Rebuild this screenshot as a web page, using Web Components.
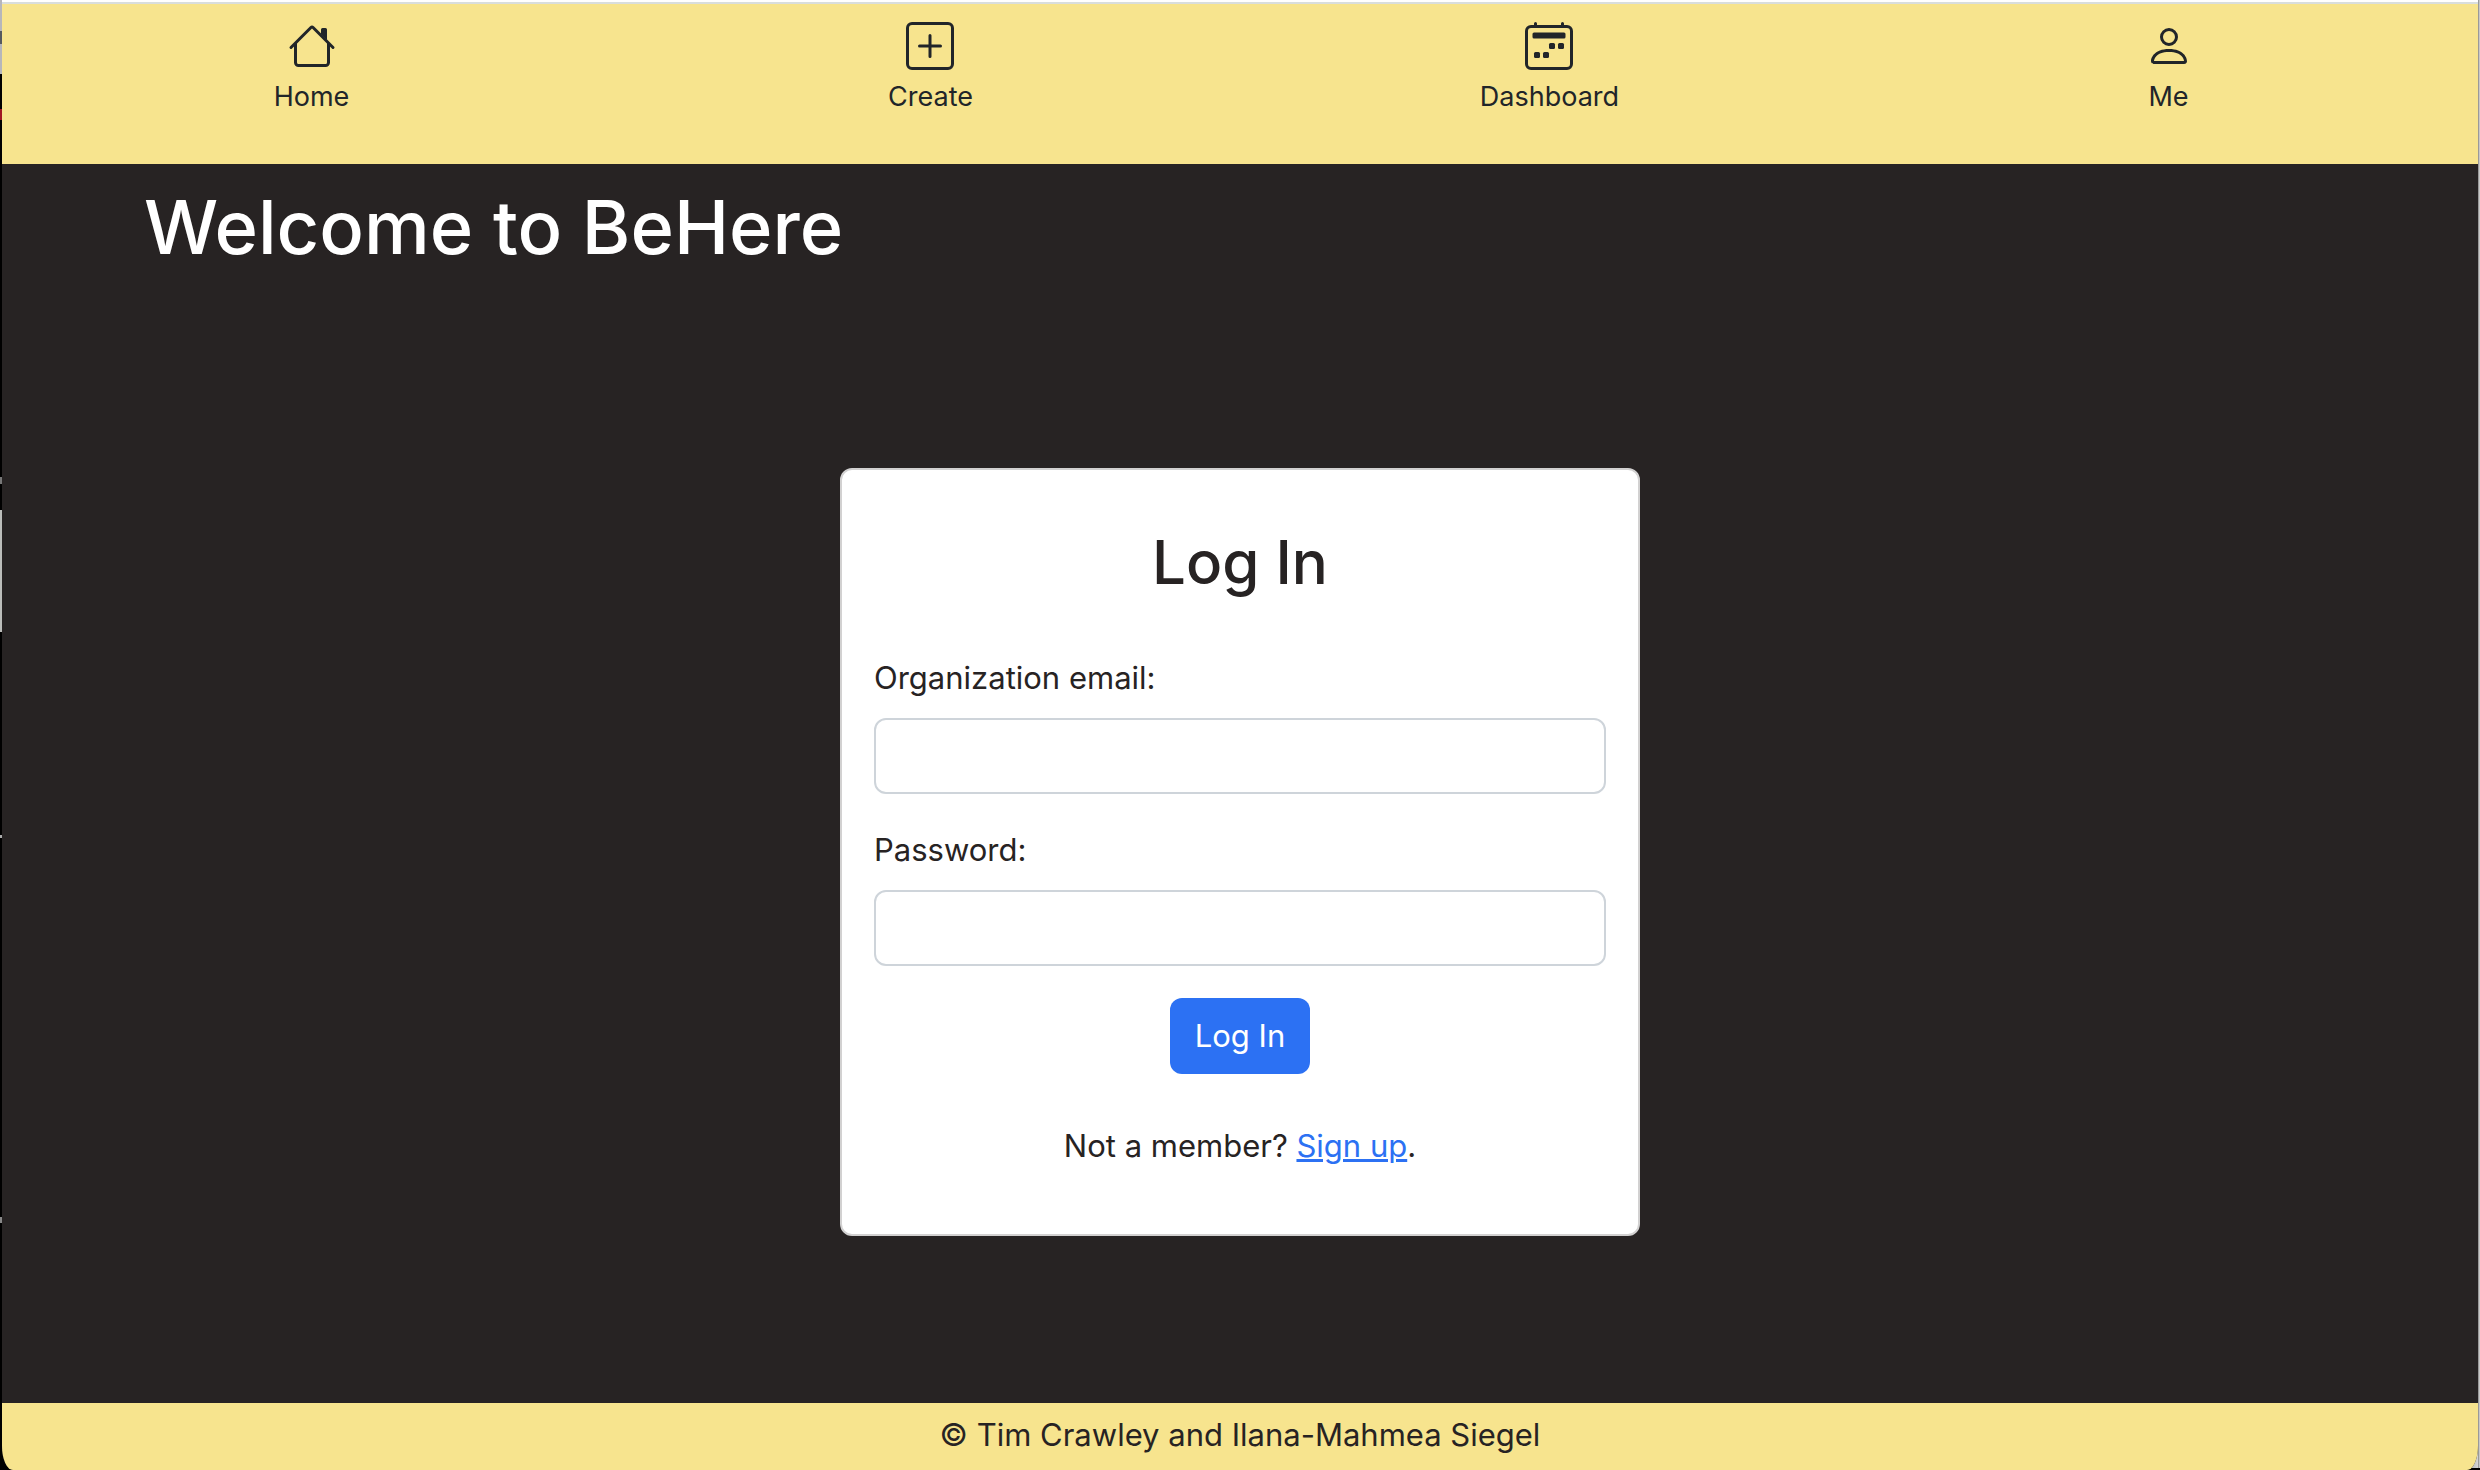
<!DOCTYPE html>
<html lang="en">
<head>
<meta charset="utf-8">
<meta name="viewport" content="width=device-width, initial-scale=1">
<title>BeHere</title>
<style>
  :root { --sand: #f7e48e; --ink: #272323; --blue: #2c71f3; --line: #ced4da; }
  body { margin: 0; font: 400 31px/48px Inter, "Liberation Sans", sans-serif; color: var(--ink); }
</style>
</head>
<body>
<be-app>
  <be-nav slot="nav">
    <be-nav-item icon="house" href="#home">Home</be-nav-item>
    <be-nav-item icon="plus" href="#create">Create</be-nav-item>
    <be-nav-item icon="calendar" href="#dashboard">Dashboard</be-nav-item>
    <be-nav-item icon="person" href="#me">Me</be-nav-item>
  </be-nav>
  <be-welcome>Welcome to BeHere</be-welcome>
  <be-login></be-login>
  <be-footer slot="footer">© Tim Crawley and Ilana-Mahmea Siegel</be-footer>
</be-app>
<script>
const define = (name, html, setup) => customElements.define(name, class extends HTMLElement {
  constructor() {
    super();
    const template = document.createElement('template');
    template.innerHTML = '<style>*{box-sizing:border-box}</style>' + html;
    this.attachShadow({ mode: 'open' }).append(template.content.cloneNode(true));
  }
  connectedCallback() { if (setup) setup(this, this.shadowRoot); }
});

// Window frame: desktop shows through the narrow margins at both sides.
define('be-app', `
<style>
  :host {
    display: flex; min-height: 100vh; padding: 0 2px; box-sizing: border-box;
    background:
      linear-gradient(90deg, #999 1px, #c8c8c8 1px) right top / 2px calc(100% - 2px) no-repeat,
      linear-gradient(90deg, #999, #ddd) right bottom 2px / 16px 24px no-repeat,
      linear-gradient(#b6b6bb 31px, #56595f 31px 44px, #b6b6bb 44px 74px, #000 74px 109px,
        #a01822 109px 120px, #000 120px 477px, #777 477px 484px, #000 484px 510px, #bbbdba 510px 632px,
        #000 632px 835px, #aaa 835px 838px, #000 838px 1217px, #888 1217px 1223px, #000 1223px) left top / 2px 100% no-repeat,
      #000;
  }
  .window {
    flex: 1; display: flex; flex-direction: column; overflow: hidden;
    border-top: 2px solid #fff; border-radius: 0 0 11px 11px / 0 0 24px 24px; background: var(--ink);
  }
  main { flex: 1; display: flex; flex-direction: column; padding-top: 15px; }
</style>
<div class="window"><slot name="nav"></slot><main><slot></slot></main><slot name="footer"></slot></div>`);

define('be-nav', `
<style>
  :host { display: block; background: var(--sand); border-top: 2px solid #d9dedd; }
  nav { display: flex; padding: 18px 0 44px; }
</style>
<nav><slot></slot></nav>`);

const icons = {
  house: '<path fill-rule="evenodd" d="M2 13.5V7h1v6.5a.5.5 0 0 0 .5.5h9a.5.5 0 0 0 .5-.5V7h1v6.5a1.5 1.5 0 0 1-1.5 1.5h-9A1.5 1.5 0 0 1 2 13.5zm11-11V6l-2-2V2.5a.5.5 0 0 1 .5-.5h1a.5.5 0 0 1 .5.5z"/><path fill-rule="evenodd" d="M7.293 1.5a1 1 0 0 1 1.414 0l6.647 6.646a.5.5 0 0 1-.708.708L8 2.207 1.354 8.854a.5.5 0 1 1-.708-.708L7.293 1.5z"/>',
  plus: '<path d="M14 1a1 1 0 0 1 1 1v12a1 1 0 0 1-1 1H2a1 1 0 0 1-1-1V2a1 1 0 0 1 1-1h12zM2 0a2 2 0 0 0-2 2v12a2 2 0 0 0 2 2h12a2 2 0 0 0 2-2V2a2 2 0 0 0-2-2H2z"/><path d="M8 4a.5.5 0 0 1 .5.5v3h3a.5.5 0 0 1 0 1h-3v3a.5.5 0 0 1-1 0v-3h-3a.5.5 0 0 1 0-1h3v-3A.5.5 0 0 1 8 4z"/>',
  calendar: '<path d="M3.5 0a.5.5 0 0 1 .5.5V1h8V.5a.5.5 0 0 1 1 0V1h1a2 2 0 0 1 2 2v11a2 2 0 0 1-2 2H2a2 2 0 0 1-2-2V3a2 2 0 0 1 2-2h1V.5a.5.5 0 0 1 .5-.5zM2 2a1 1 0 0 0-1 1v11a1 1 0 0 0 1 1h12a1 1 0 0 0 1-1V3a1 1 0 0 0-1-1H2z"/><rect x="2.5" y="3.5" width="11" height="2" rx=".5"/><rect x="11" y="7" width="2" height="2" rx=".5"/><rect x="8" y="7" width="2" height="2" rx=".5"/><rect x="3" y="10" width="2" height="2" rx=".5"/><rect x="6" y="10" width="2" height="2" rx=".5"/>',
  person: '<path d="M8 8a3 3 0 1 0 0-6 3 3 0 0 0 0 6zm2-3a2 2 0 1 1-4 0 2 2 0 0 1 4 0zm4 8c0 1-1 1-1 1H3s-1 0-1-1 1-4 6-4 6 3 6 4zm-1-.004c-.001-.246-.154-.986-.832-1.664C11.516 10.68 10.289 10 8 10c-2.29 0-3.516.68-4.168 1.332-.678.678-.83 1.418-.832 1.664h10z"/>'
};

define('be-nav-item', `
<style>
  :host { flex: 1; display: flex; justify-content: center; }
  a { display: flex; flex-direction: column; align-items: center; gap: 4px;
      color: #212529; font-size: 27px; line-height: 46px; text-decoration: none; }
  svg { width: 48px; height: 48px; fill: currentColor; }
</style>
<a><svg viewBox="0 0 16 16" aria-hidden="true"></svg><span><slot></slot></span></a>`, (host, root) => {
  root.querySelector('a').href = host.getAttribute('href');
  root.querySelector('svg').innerHTML = icons[host.getAttribute('icon')];
});

define('be-welcome', `
<style>
  :host { display: block; width: 100%; max-width: 2280px; margin: 0 auto; padding: 0 44px; box-sizing: border-box; }
  h1 { margin: 0; color: #fff; font-size: 74px; line-height: 96px; font-weight: 500; }
</style>
<h1><slot></slot></h1>`);

define('be-field', `
<style>
  :host { display: flex; flex-direction: column; gap: 16px; }
  input { width: 100%; height: 76px; padding: 12px 24px; border: 2px solid var(--line);
          border-radius: 12px; background: #fff; color: inherit; font: inherit; }
</style>
<label for="control"></label><input id="control">`, (host, root) => {
  root.querySelector('label').textContent = host.getAttribute('label');
  root.querySelector('input').type = host.getAttribute('type');
});

define('be-login', `
<style>
  :host { flex: 1; display: flex; justify-content: center; align-items: center; padding-top: 25px; }
  form { width: 100%; max-width: 800px; display: flex; flex-direction: column; gap: 32px;
         padding: 54px 32px 64px; background: #fff; border: 2px solid #d2d1d1; border-radius: 12px; }
  h2 { margin: 0 0 22px; font-size: 60px; line-height: 76px; font-weight: 500; text-align: center; }
  button { align-self: center; height: 76px; padding: 0 25px; border: 0; border-radius: 12px;
           background: var(--blue); color: #fff; font: inherit; }
  p { margin: 16px 0 0; text-align: center; }
  a { color: var(--blue); }
</style>
<form>
  <h2>Log In</h2>
  <be-field label="Organization email:" type="email"></be-field>
  <be-field label="Password:" type="password"></be-field>
  <button type="button">Log In</button>
  <p>Not a member? <a href="#signup">Sign up</a>.</p>
</form>`);

define('be-footer', `
<style>
  :host { display: block; background: var(--sand); }
  footer { padding: 8px 0 11px; text-align: center; }
</style>
<footer><slot></slot></footer>`);
</script>
</body>
</html>
